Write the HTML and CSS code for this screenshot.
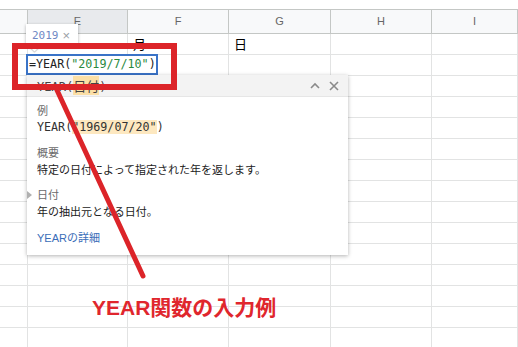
FILE: index.html
```html
<!DOCTYPE html>
<html lang="ja">

<head>
  <meta charset="UTF-8">
  <meta name="viewport" content="width=device-width, initial-scale=1.0">
  <title>YEAR関数</title>
  <link rel="stylesheet" href="styles.css">
</head>

<body>
  <div class="sheet">
    <div class="topbar"></div>
    <!-- 列見出し -->
    <div class="row head">
      <div class="cell"></div>
      <div class="cell active">E</div>
      <div class="cell">F</div>
      <div class="cell">G</div>
      <div class="cell">H</div>
      <div class="cell">I</div>
    </div>
    <div class="row">
      <div class="cell"></div>
      <div class="cell"></div>
      <div class="cell">月</div>
      <div class="cell">日</div>
      <div class="cell"></div>
      <div class="cell"></div>
    </div>
    <div class="row"><div class="cell"></div><div class="cell"></div><div class="cell"></div><div class="cell"></div><div class="cell"></div><div class="cell"></div></div>
    <div class="row"><div class="cell"></div><div class="cell"></div><div class="cell"></div><div class="cell"></div><div class="cell"></div><div class="cell"></div></div>
    <div class="row"><div class="cell"></div><div class="cell"></div><div class="cell"></div><div class="cell"></div><div class="cell"></div><div class="cell"></div></div>
    <div class="row"><div class="cell"></div><div class="cell"></div><div class="cell"></div><div class="cell"></div><div class="cell"></div><div class="cell"></div></div>
    <div class="row"><div class="cell"></div><div class="cell"></div><div class="cell"></div><div class="cell"></div><div class="cell"></div><div class="cell"></div></div>
    <div class="row"><div class="cell"></div><div class="cell"></div><div class="cell"></div><div class="cell"></div><div class="cell"></div><div class="cell"></div></div>
    <div class="row"><div class="cell"></div><div class="cell"></div><div class="cell"></div><div class="cell"></div><div class="cell"></div><div class="cell"></div></div>
    <div class="row"><div class="cell"></div><div class="cell"></div><div class="cell"></div><div class="cell"></div><div class="cell"></div><div class="cell"></div></div>
    <div class="row"><div class="cell"></div><div class="cell"></div><div class="cell"></div><div class="cell"></div><div class="cell"></div><div class="cell"></div></div>
    <div class="row"><div class="cell"></div><div class="cell"></div><div class="cell"></div><div class="cell"></div><div class="cell"></div><div class="cell"></div></div>
    <div class="row"><div class="cell"></div><div class="cell"></div><div class="cell"></div><div class="cell"></div><div class="cell"></div><div class="cell"></div></div>
    <div class="row"><div class="cell"></div><div class="cell"></div><div class="cell"></div><div class="cell"></div><div class="cell"></div><div class="cell"></div></div>
    <div class="row"><div class="cell"></div><div class="cell"></div><div class="cell"></div><div class="cell"></div><div class="cell"></div><div class="cell"></div></div>
    <div class="row"><div class="cell"></div><div class="cell"></div><div class="cell"></div><div class="cell"></div><div class="cell"></div><div class="cell"></div></div>

    <!-- 値のプレビュー -->
    <div class="chip"><span class="val">2019</span><span class="x">×</span></div>

    <!-- 入力中のセル -->
    <div class="editor">=YEAR(<span class="str">"2019/7/10"</span>)</div>

    <!-- 関数のヘルプ -->
    <div class="help">
      <div class="help-head">
        <span class="sig">YEAR(<span class="mark">日付</span>)</span>
        <span class="tools">
          <svg width="12" height="12" viewBox="0 0 12 12"><path d="M2 8 L6 4 L10 8" fill="none" stroke="#8a8a8a" stroke-width="1.6"/></svg>
          <svg width="12" height="12" viewBox="0 0 12 12"><path d="M2 2 L10 10 M10 2 L2 10" fill="none" stroke="#8a8a8a" stroke-width="1.6"/></svg>
        </span>
      </div>
      <div class="help-body">
        <div class="sec">
          <p class="label">例</p>
          <p class="code">YEAR(<span class="mark">"1969/07/20"</span>)</p>
        </div>
        <div class="sec">
          <p class="label">概要</p>
          <p class="text">特定の日付によって指定された年を返します。</p>
        </div>
        <div class="sec">
          <p class="label arg">日付</p>
          <p class="text">年の抽出元となる日付。</p>
        </div>
        <div class="sec more">
          <p class="link">YEARの詳細</p>
        </div>
      </div>
    </div>

    <!-- 注釈 -->
    <svg class="note" width="518" height="347" viewBox="0 0 518 347">
      <rect x="15" y="46" width="159" height="41" fill="none" stroke="#dc2429" stroke-width="6"/>
      <line x1="56" y1="88" x2="143" y2="276" stroke="#dc2429" stroke-width="5" stroke-linecap="round"/>
    </svg>
    <div class="caption">YEAR関数の入力例</div>
  </div>
</body>

</html>
```

FILE: styles.css
```css
body {
  margin: 0;
  background: #fff;
  font-family: "Liberation Sans", "Noto Sans CJK JP", sans-serif;
}

p {
  margin: 0;
}

.sheet {
  position: relative;
  width: 518px;
  height: 347px;
  overflow: hidden;
}

.topbar {
  height: 9px;
  border-bottom: 1px solid #c4c7c5;
}

.row {
  display: grid;
  grid-template-columns: 28px 100px 101px 102px 101px 1fr;
  height: 21px;
}

.cell {
  border-right: 1px solid #e2e3e3;
  border-bottom: 1px solid #e2e3e3;
  padding-left: 5px;
  font-size: 13px;
  line-height: 20px;
  color: #000;
  font-family: "Noto Sans CJK JP", sans-serif;
}

.row.head {
  height: 24px;
  background: #f8f9fa;
}

.head .cell {
  border-right-color: #c4c7c5;
  border-bottom-color: #c4c7c5;
  padding-left: 0;
  text-align: center;
  font-family: "Liberation Sans", sans-serif;
  font-size: 11px;
  line-height: 23px;
  color: #666;
}

.head .cell.active {
  background: #e8eaed;
}

/* 値のプレビュー */
.chip {
  position: absolute;
  left: 26px;
  top: 24px;
  width: 52px;
  height: 22px;
  background: #fff;
  box-shadow: 0 1px 3px rgba(0, 0, 0, 0.3);
  display: flex;
  align-items: center;
  gap: 4px;
  padding-left: 6px;
  box-sizing: border-box;
}

.chip::after {
  content: "";
  position: absolute;
  left: 5px;
  bottom: -4px;
  width: 7px;
  height: 7px;
  background: #fff;
  transform: rotate(45deg);
  box-shadow: 1px 1px 1px rgba(0, 0, 0, 0.2);
}

.chip .val {
  font-family: "DejaVu Sans Mono", monospace;
  font-size: 11px;
  color: #6f88c4;
}

.chip .x {
  font-size: 13px;
  color: #9aa0a6;
}

/* 入力中のセル */
.editor {
  position: absolute;
  left: 26px;
  top: 54px;
  width: 132px;
  height: 21px;
  border: 2px solid #3a73c7;
  box-sizing: border-box;
  padding-left: 1px;
  font-family: "DejaVu Sans Mono", monospace;
  font-size: 11.7px;
  line-height: 17px;
  color: #222;
  background: #fff;
}

.editor .str {
  color: #2a8a3e;
}

/* 関数のヘルプ */
.help {
  position: absolute;
  left: 27px;
  top: 75px;
  width: 321px;
  height: 180px;
  background: #fff;
  box-shadow: 0 1px 4px rgba(0, 0, 0, 0.3);
}

.help-head {
  height: 21px;
  background: #f3f3f3;
  border-bottom: 1px solid #e6e6e6;
  display: flex;
  align-items: center;
  justify-content: space-between;
  padding: 0 8px 0 10px;
}

.sig {
  font-family: "DejaVu Sans Mono", "Noto Sans CJK JP", monospace;
  font-size: 12px;
  color: #444;
}

.sig .mark {
  font-family: "Noto Sans CJK JP", sans-serif;
  font-size: 13px;
  background: #fbdfa6;
}

.tools {
  display: flex;
  gap: 7px;
}

.help-body {
  padding: 5px 10px 0;
}

.sec + .sec {
  margin-top: 8px;
}

.sec.more {
  margin-top: 10px;
}

.label,
.text,
.link {
  font-family: "Noto Sans CJK JP", sans-serif;
  font-size: 11px;
  line-height: 17px;
}

.label {
  color: #6b6b6b;
}

.label.arg {
  position: relative;
}

.label.arg::before {
  content: "";
  position: absolute;
  left: -10px;
  top: 5px;
  border-left: 5px solid #b0b0b0;
  border-top: 4px solid transparent;
  border-bottom: 4px solid transparent;
}

.text {
  color: #222;
}

.code {
  font-family: "DejaVu Sans Mono", monospace;
  font-size: 11.7px;
  line-height: 17px;
  color: #333;
}

.code .mark {
  background: #fde8c0;
}

.link {
  font-family: "Liberation Sans", "Noto Sans CJK JP", sans-serif;
  color: #3a6db8;
}

/* 注釈 */
.note {
  position: absolute;
  left: 0;
  top: 0;
  pointer-events: none;
}

.caption {
  position: absolute;
  left: 92px;
  top: 294px;
  font-family: "Liberation Sans", "Noto Sans CJK JP", sans-serif;
  font-weight: bold;
  font-size: 21px;
  line-height: 28px;
  color: #e0262d;
}
```
